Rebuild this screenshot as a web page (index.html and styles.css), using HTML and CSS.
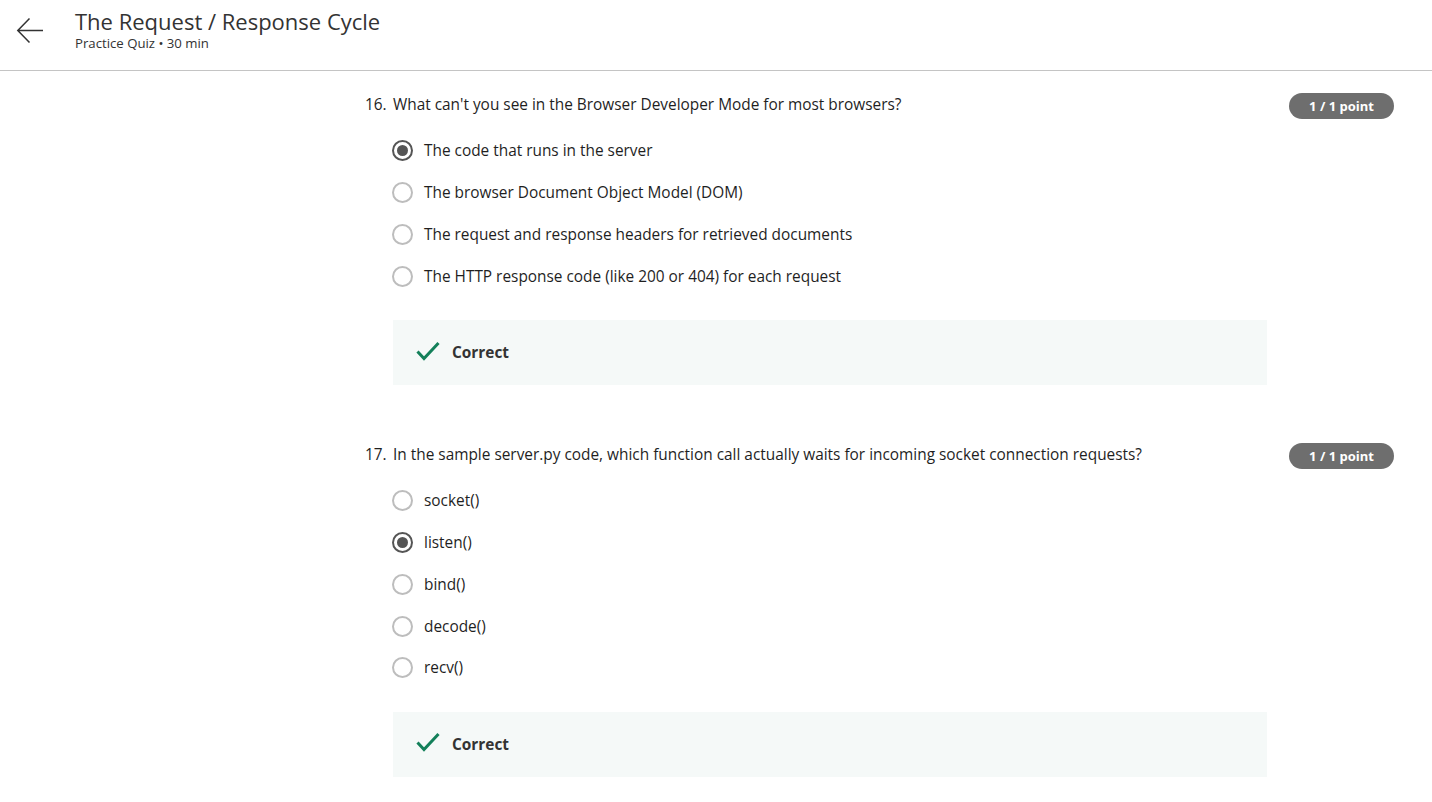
FILE: index.html
```html
<!DOCTYPE html>
<html lang="en">
<head>
<meta charset="utf-8">
<title>The Request / Response Cycle</title>
<link rel="stylesheet" href="styles.css">
</head>
<body>
<header class="topbar">
  <button class="back" aria-label="Back">
    <svg width="28" height="28" viewBox="0 0 28 28"><path d="M27 13.5H2.5M13.5 1.5L1.8 13.5l11.7 12" fill="none" stroke="#333" stroke-width="1.5"/></svg>
  </button>
  <div class="titles">
    <h1 class="title">The Request / Response Cycle</h1>
    <div class="sub">Practice Quiz • 30 min</div>
  </div>
</header>
<main class="quiz">
  <section class="question">
    <div class="qhead">
      <div class="qtext"><span class="num">16.</span><span>What can't you see in the Browser Developer Mode for most browsers?</span></div>
      <span class="badge">1 / 1 point</span>
    </div>
    <ul class="options">
      <li class="option"><span class="radio checked"></span><span>The code that runs in the server</span></li>
      <li class="option"><span class="radio"></span><span>The browser Document Object Model (DOM)</span></li>
      <li class="option"><span class="radio"></span><span>The request and response headers for retrieved documents</span></li>
      <li class="option"><span class="radio"></span><span>The HTTP response code (like 200 or 404) for each request</span></li>
    </ul>
    <div class="feedback">
      <svg class="check" width="24" height="20" viewBox="0 0 24 20"><path d="M1.5 10.5l6.5 7L22.5 2" fill="none" stroke="#13805a" stroke-width="3"/></svg>
      <span>Correct</span>
    </div>
  </section>
  <section class="question">
    <div class="qhead">
      <div class="qtext"><span class="num">17.</span><span>In the sample server.py code, which function call actually waits for incoming socket connection requests?</span></div>
      <span class="badge">1 / 1 point</span>
    </div>
    <ul class="options">
      <li class="option"><span class="radio"></span><span>socket()</span></li>
      <li class="option"><span class="radio checked"></span><span>listen()</span></li>
      <li class="option"><span class="radio"></span><span>bind()</span></li>
      <li class="option"><span class="radio"></span><span>decode()</span></li>
      <li class="option"><span class="radio"></span><span>recv()</span></li>
    </ul>
    <div class="feedback">
      <svg class="check" width="24" height="20" viewBox="0 0 24 20"><path d="M1.5 10.5l6.5 7L22.5 2" fill="none" stroke="#13805a" stroke-width="3"/></svg>
      <span>Correct</span>
    </div>
  </section>
</main>
</body>
</html>
```
FILE: styles.css
```css
* { box-sizing: border-box; }
html, body { margin: 0; padding: 0; }
body {
  font-family: "Open Sans", "Liberation Sans", sans-serif;
  color: #1f1f1f;
  background: #fff;
  overflow: hidden;
}
.topbar {
  height: 71px;
  border-bottom: 1px solid #c4c4c4;
  display: flex;
  align-items: flex-start;
}
.back {
  border: 0;
  background: none;
  padding: 0;
  margin: 17px 0 0 16px;
  width: 28px;
  height: 28px;
  display: flex;
}
.titles { margin-left: 31px; padding-top: 6px; }
.title {
  margin: 0;
  font-size: 22px;
  font-weight: 400;
  line-height: 30px;
  color: #333;
}
.sub {
  font-size: 13.2px;
  line-height: 16px;
  color: #333;
  margin-top: -1px;
}
.quiz { padding: 22px 38px 0 365px; }
.question { margin-bottom: 58px; }
.qhead {
  display: flex;
  justify-content: space-between;
  align-items: flex-start;
}
.qtext {
  display: flex;
  font-size: 15.4px;
  line-height: 24px;
  color: #1f1f1f;
}
.num { width: 28px; flex: none; }
.badge {
  flex: none;
  width: 105px;
  height: 26px;
  margin-top: 0;
  border-radius: 13px;
  background: #6e6e6e;
  color: #fff;
  font-size: 13px;
  font-weight: 700;
  line-height: 26px;
  text-align: center;
}
.options {
  list-style: none;
  margin: 11px 0 0 27px;
  padding: 0;
}
.option {
  height: 41.75px;
  display: flex;
  align-items: center;
  font-size: 15.4px;
  color: #1f1f1f;
}
.radio {
  width: 21px;
  height: 21px;
  border-radius: 50%;
  border: 2px solid #bdbdbd;
  margin-right: 11px;
  flex: none;
  display: flex;
  align-items: center;
  justify-content: center;
}
.radio.checked { border-color: #555; }
.radio.checked::after {
  content: "";
  width: 11px;
  height: 11px;
  border-radius: 50%;
  background: #555;
}
.feedback {
  margin: 23px 0 0 28px;
  width: 874px;
  height: 65px;
  background: #f5f9f8;
  display: flex;
  align-items: center;
  padding-left: 23px;
  font-size: 15.4px;
  font-weight: 700;
  color: #333;
}
.check { margin-right: 12px; margin-top: -4px; }
```
